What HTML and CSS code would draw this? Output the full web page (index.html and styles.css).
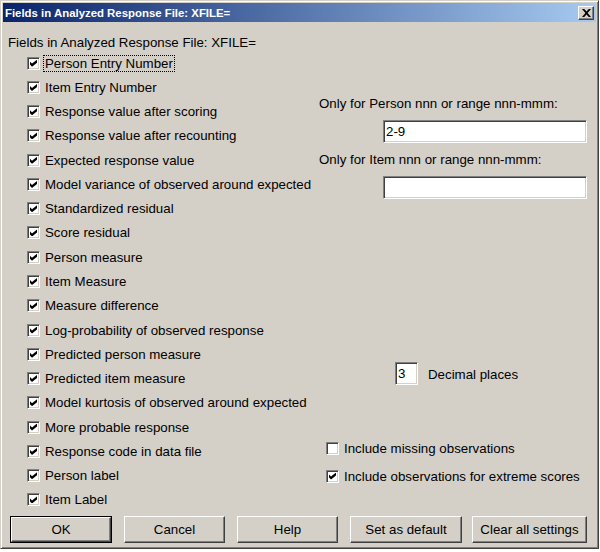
FILE: index.html
```html
<!DOCTYPE html>
<html>
<head>
<meta charset="utf-8">
<link rel="stylesheet" href="styles.css">
</head>
<body>
<div class="window">
  <div class="titlebar">
    <span class="title">Fields in Analyzed Response File: XFILE=</span>
    <span class="close"><svg width="9" height="8" viewBox="0 0 9 8"><path d="M0 0 L2.2 0 L4.5 2.6 L6.8 0 L9 0 L5.6 4 L9 8 L6.8 8 L4.5 5.4 L2.2 8 L0 8 L3.4 4 Z" fill="#000"/></svg></span>
  </div>
  <div class="content">
    <div class="heading">Fields in Analyzed Response File: XFILE=</div>
    <div class="main">
      <ul class="fields">
        <li class="row"><span class="cb on"></span><span class="lbl focus">Person Entry Number</span></li>
        <li class="row"><span class="cb on"></span><span class="lbl">Item Entry Number</span></li>
        <li class="row"><span class="cb on"></span><span class="lbl">Response value after scoring</span></li>
        <li class="row"><span class="cb on"></span><span class="lbl">Response value after recounting</span></li>
        <li class="row"><span class="cb on"></span><span class="lbl">Expected response value</span></li>
        <li class="row"><span class="cb on"></span><span class="lbl">Model variance of observed around expected</span></li>
        <li class="row"><span class="cb on"></span><span class="lbl">Standardized residual</span></li>
        <li class="row"><span class="cb on"></span><span class="lbl">Score residual</span></li>
        <li class="row"><span class="cb on"></span><span class="lbl">Person measure</span></li>
        <li class="row"><span class="cb on"></span><span class="lbl">Item Measure</span></li>
        <li class="row"><span class="cb on"></span><span class="lbl">Measure difference</span></li>
        <li class="row"><span class="cb on"></span><span class="lbl">Log-probability of observed response</span></li>
        <li class="row"><span class="cb on"></span><span class="lbl">Predicted person measure</span></li>
        <li class="row"><span class="cb on"></span><span class="lbl">Predicted item measure</span></li>
        <li class="row"><span class="cb on"></span><span class="lbl">Model kurtosis of observed around expected</span></li>
        <li class="row"><span class="cb on"></span><span class="lbl">More probable response</span></li>
        <li class="row"><span class="cb on"></span><span class="lbl">Response code in data file</span></li>
        <li class="row"><span class="cb on"></span><span class="lbl">Person label</span></li>
        <li class="row"><span class="cb on"></span><span class="lbl">Item Label</span></li>
      </ul>
      <div class="side">
        <div class="sidelabel first">Only for Person nnn or range nnn-mmm:</div>
        <div class="textbox wide">2-9</div>
        <div class="sidelabel">Only for Item nnn or range nnn-mmm:</div>
        <div class="textbox wide"></div>
        <div class="decimal"><span class="textbox small">3</span><span class="declbl">Decimal places</span></div>
        <div class="siderow missing"><span class="cb"></span><span class="lbl">Include missing observations</span></div>
        <div class="siderow extreme"><span class="cb on"></span><span class="lbl">Include observations for extreme scores</span></div>
      </div>
    </div>
    <div class="buttons">
      <div class="btn default w102"><span class="btn-inner">OK</span></div>
      <div class="btn w101"><span class="btn-inner">Cancel</span></div>
      <div class="btn w101"><span class="btn-inner">Help</span></div>
      <div class="btn w112"><span class="btn-inner">Set as default</span></div>
      <div class="btn w115 last"><span class="btn-inner">Clear all settings</span></div>
    </div>
  </div>
</div>
</body>
</html>
```

FILE: styles.css
```css
html, body {
  margin: 0;
  padding: 0;
  background: #ffffff;
}
body {
  font-family: "Liberation Sans", Arial, sans-serif;
  font-size: 13.3px;
  color: #000;
}
.window {
  box-sizing: border-box;
  width: 599px;
  height: 549px;
  background: #d4d0c8;
  border: 1px solid;
  border-color: #d4d0c8 #404040 #404040 #d4d0c8;
  box-shadow: inset 1px 1px #ffffff, inset -1px -1px #808080;
  padding: 2px;
  display: flex;
  flex-direction: column;
}
.titlebar {
  height: 19px;
  background: linear-gradient(to right, #0a246a, #a6caf0);
  display: flex;
  align-items: center;
  justify-content: space-between;
  padding: 0 2px;
}
.title {
  color: #fff;
  font-weight: bold;
  font-size: 11.4px;
  white-space: nowrap;
}
.close {
  box-sizing: border-box;
  width: 16px;
  height: 14px;
  background: #d4d0c8;
  border: 1px solid;
  border-color: #fff #404040 #404040 #fff;
  box-shadow: inset -1px -1px #808080;
  display: flex;
  align-items: center;
  justify-content: center;
}
.close svg { display: block; }
.content {
  padding: 0 5px;
  display: flex;
  flex-direction: column;
}
.heading {
  margin-top: 13px;
  line-height: 16px;
  height: 16px;
  white-space: nowrap;
}
.main {
  display: flex;
}
.fields {
  list-style: none;
  margin: 0;
  padding: 0 0 0 19px;
  width: 311px;
  box-sizing: border-box;
}
.row {
  height: 24.28px;
  display: flex;
  align-items: center;
  white-space: nowrap;
}
.cb {
  box-sizing: border-box;
  width: 13px;
  height: 13px;
  flex: none;
  background: #fff;
  border: 1px solid;
  border-color: #808080 #fff #fff #808080;
  box-shadow: inset 1px 1px #404040, inset -1px -1px #d4d0c8;
  position: relative;
}
.cb.on::after {
  content: "";
  position: absolute;
  left: 2px;
  top: 2px;
  width: 7px;
  height: 7px;
  background: #000;
  clip-path: polygon(0% 28.6%, 28.6% 57.1%, 100% 0%, 100% 42.9%, 28.6% 100%, 0% 71.4%);
}
.lbl {
  margin-left: 3px;
  padding: 1px 1px 0;
  line-height: 14px;
  border: 1px dotted transparent;
}
.lbl.focus {
  border-color: #000;
}
.side {
  display: flex;
  flex-direction: column;
  flex: 1;
}
.sidelabel {
  line-height: 16px;
  height: 16px;
  margin-top: 9px;
  padding-top: 1px;
  white-space: nowrap;
}
.sidelabel.first {
  margin-top: 44px;
}
.textbox {
  box-sizing: border-box;
  height: 23px;
  background: #fff;
  border: 1px solid;
  border-color: #808080 #fff #fff #808080;
  box-shadow: inset 1px 1px #404040, inset -1px -1px #d4d0c8;
  padding: 2px 2px 0;
  line-height: 17px;
}
.textbox.wide {
  width: 204px;
  margin-left: 64px;
  margin-top: 8px;
}
.textbox.wide + .sidelabel { margin-top: 8px; }
.sidelabel + .textbox.wide { margin-top: 8px; }
.decimal {
  margin-top: 163px;
  margin-left: 76px;
  display: flex;
  align-items: center;
}
.textbox.small {
  width: 23px;
  display: block;
}
.declbl {
  margin-left: 10px;
  padding-top: 1px;
}
.siderow {
  height: 16px;
  display: flex;
  align-items: center;
  margin-left: 7px;
  white-space: nowrap;
}
.siderow .lbl { margin-left: 3px; }
.siderow.missing { margin-top: 55px; }
.siderow.extreme { margin-top: 12px; }
.buttons {
  margin-top: 4px;
  margin-left: 2px;
  display: flex;
}
.btn {
  box-sizing: border-box;
  height: 27px;
  margin-right: 12px;
  background: #d4d0c8;
  border: 1px solid;
  border-color: #fff #404040 #404040 #fff;
  box-shadow: inset -1px -1px #808080;
  display: flex;
}
.btn.last { margin-right: 0; }
.btn-inner {
  flex: 1;
  display: flex;
  align-items: center;
  justify-content: center;
  white-space: nowrap;
}
.btn.default {
  border: 1px solid #000;
  box-shadow: none;
}
.btn.default .btn-inner {
  border: 1px solid;
  border-color: #fff #404040 #404040 #fff;
  box-shadow: inset -1px -1px #808080;
}
.w102 { width: 102px; }
.w101 { width: 101px; }
.w112 { width: 112px; margin-right: 10px; }
.w115 { width: 115px; }
```
